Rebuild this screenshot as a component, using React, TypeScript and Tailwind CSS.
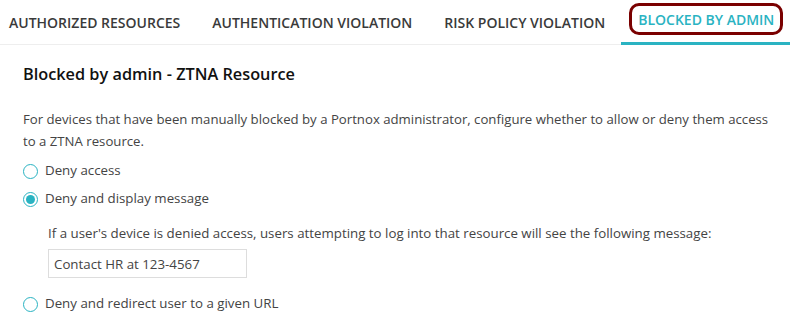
import React, { useState } from 'react';

const tabs = ['AUTHORIZED RESOURCES', 'AUTHENTICATION VIOLATION', 'RISK POLICY VIOLATION', 'BLOCKED BY ADMIN'];

const Radio: React.FC<{ checked: boolean; label: string; onClick: () => void }> = ({ checked, label, onClick }) => (
  <label className="flex items-center gap-[7px] cursor-pointer" onClick={onClick}>
    <span className="w-[15px] h-[15px] rounded-full border border-[#2ab3c2] flex items-center justify-center bg-white">
      {checked && <span className="w-[9px] h-[9px] rounded-full bg-[#2ab3c2]" />}
    </span>
    <span>{label}</span>
  </label>
);

const App: React.FC = () => {
  const [choice, setChoice] = useState('message');
  const [message, setMessage] = useState('Contact HR at 123-4567');

  return (
    <div className="w-[807px] h-[334px] bg-white text-[#3c3c3c] font-['Open_Sans',sans-serif]">
      <div className="flex w-[789px] border-b border-[#eeeeee] h-[45px]">
        {tabs.map((t, i) => {
          const active = i === tabs.length - 1;
          return active ? (
            <div key={t} className="pl-[8px] pr-[7px] flex items-center border-b-[3px] border-[#2ab3c2] -mb-px">
              <span className="border-[3px] border-[#7a0000] rounded-[10px] px-[6px] h-[32px] flex items-center text-[14px] font-semibold text-[#2ab3c2] -mt-[4px] whitespace-nowrap">
                {t}
              </span>
            </div>
          ) : (
            <div
              key={t}
              className={`${i === 0 ? 'pl-[9px]' : 'pl-[16px]'} pr-[16px] flex items-center text-[14px] font-semibold text-[#3a3a3a] whitespace-nowrap`}
            >
              {t}
            </div>
          );
        })}
      </div>

      <div className="pl-[23px] pr-4 pt-[18px]">
        <h2 className="text-[16.3px] font-semibold text-[#111111] leading-[22px]">Blocked by admin - ZTNA Resource</h2>
        <p className="mt-[23px] text-[13.2px] leading-[22px] text-[#444444] w-[760px]">
          For devices that have been manually blocked by a Portnox administrator, configure whether to allow or deny them access to a ZTNA resource.
        </p>

        <div className="mt-[5px] flex flex-col text-[13.3px] text-[#444444]">
          <div className="h-[28px] flex items-center">
            <Radio checked={choice === 'deny'} label="Deny access" onClick={() => setChoice('deny')} />
          </div>
          <div className="h-[28px] flex items-center">
            <Radio checked={choice === 'message'} label="Deny and display message" onClick={() => setChoice('message')} />
          </div>
          <div className="pl-[25px] pt-[9px]">
            <p className="leading-[22px]">
              If a user's device is denied access, users attempting to log into that resource will see the following message:
            </p>
            <input
              value={message}
              onChange={(e) => setMessage(e.target.value)}
              className="mt-[5px] w-[199px] h-[29px] border border-[#dddddd] px-[5px] text-[13.3px] text-[#444444] outline-none"
            />
          </div>
          <div className="h-[28px] flex items-center mt-[12px]">
            <Radio checked={choice === 'url'} label="Deny and redirect user to a given URL" onClick={() => setChoice('url')} />
          </div>
        </div>
      </div>
    </div>
  );
};

export default App;
